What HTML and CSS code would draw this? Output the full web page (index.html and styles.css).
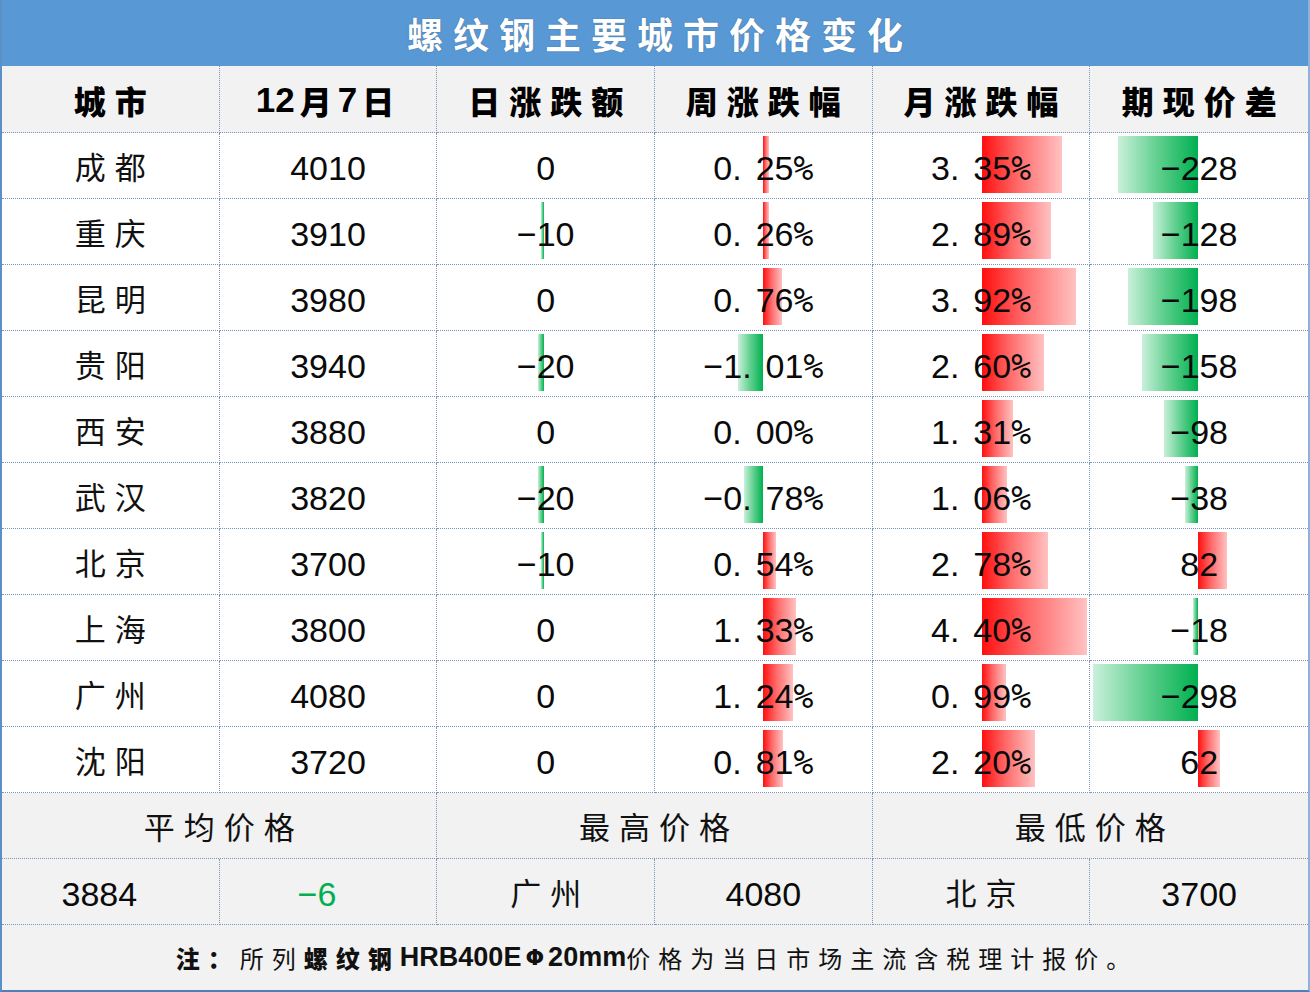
FILE: index.html
```html
<!DOCTYPE html>
<html lang="zh-CN">
<head>
<meta charset="utf-8">
<title>螺纹钢主要城市价格变化</title>
<link rel="stylesheet" href="styles.css">
</head>
<body>
<div class="sheet">
  <div class="title">螺纹钢主要城市价格变化</div>

  <div class="c hd"><span class="cjk">城市</span></div>
  <div class="c hd date"><span class="hnum">12</span><span class="hc">月</span><span class="hnum">7</span><span class="hc">日</span></div>
  <div class="c hd"><span class="cjk">日涨跌额</span></div>
  <div class="c hd"><span class="cjk">周涨跌幅</span></div>
  <div class="c hd"><span class="cjk">月涨跌幅</span></div>
  <div class="c hd last"><span class="cjk">期现价差</span></div>

  <!-- 成都 -->
  <div class="c city">成都</div>
  <div class="c num">4010</div>
  <div class="c num ax-d">0</div>
  <div class="c num ax-w"><span class="bar pos" style="width:6px"></span><span class="t">0<span class="dp">.</span>25<span class="pc">%</span></span></div>
  <div class="c num ax-m"><span class="bar pos" style="width:80px"></span><span class="t">3<span class="dp">.</span>35<span class="pc">%</span></span></div>
  <div class="c num ax-s last"><span class="bar neg" style="width:80px"></span><span class="t">−228</span></div>

  <!-- 重庆 -->
  <div class="c city">重庆</div>
  <div class="c num">3910</div>
  <div class="c num ax-d"><span class="bar neg" style="width:3px"></span><span class="t">−10</span></div>
  <div class="c num ax-w"><span class="bar pos" style="width:6px"></span><span class="t">0<span class="dp">.</span>26<span class="pc">%</span></span></div>
  <div class="c num ax-m"><span class="bar pos" style="width:69px"></span><span class="t">2<span class="dp">.</span>89<span class="pc">%</span></span></div>
  <div class="c num ax-s last"><span class="bar neg" style="width:45px"></span><span class="t">−128</span></div>

  <!-- 昆明 -->
  <div class="c city">昆明</div>
  <div class="c num">3980</div>
  <div class="c num ax-d">0</div>
  <div class="c num ax-w"><span class="bar pos" style="width:19px"></span><span class="t">0<span class="dp">.</span>76<span class="pc">%</span></span></div>
  <div class="c num ax-m"><span class="bar pos" style="width:94px"></span><span class="t">3<span class="dp">.</span>92<span class="pc">%</span></span></div>
  <div class="c num ax-s last"><span class="bar neg" style="width:70px"></span><span class="t">−198</span></div>

  <!-- 贵阳 -->
  <div class="c city">贵阳</div>
  <div class="c num">3940</div>
  <div class="c num ax-d"><span class="bar neg" style="width:6px"></span><span class="t">−20</span></div>
  <div class="c num ax-w"><span class="bar neg" style="width:25px"></span><span class="t">−1<span class="dp">.</span>01<span class="pc">%</span></span></div>
  <div class="c num ax-m"><span class="bar pos" style="width:62px"></span><span class="t">2<span class="dp">.</span>60<span class="pc">%</span></span></div>
  <div class="c num ax-s last"><span class="bar neg" style="width:56px"></span><span class="t">−158</span></div>

  <!-- 西安 -->
  <div class="c city">西安</div>
  <div class="c num">3880</div>
  <div class="c num ax-d">0</div>
  <div class="c num ax-w"><span class="t">0<span class="dp">.</span>00<span class="pc">%</span></span></div>
  <div class="c num ax-m"><span class="bar pos" style="width:31px"></span><span class="t">1<span class="dp">.</span>31<span class="pc">%</span></span></div>
  <div class="c num ax-s last"><span class="bar neg" style="width:34px"></span><span class="t">−98</span></div>

  <!-- 武汉 -->
  <div class="c city">武汉</div>
  <div class="c num">3820</div>
  <div class="c num ax-d"><span class="bar neg" style="width:6px"></span><span class="t">−20</span></div>
  <div class="c num ax-w"><span class="bar neg" style="width:19px"></span><span class="t">−0<span class="dp">.</span>78<span class="pc">%</span></span></div>
  <div class="c num ax-m"><span class="bar pos" style="width:25px"></span><span class="t">1<span class="dp">.</span>06<span class="pc">%</span></span></div>
  <div class="c num ax-s last"><span class="bar neg" style="width:13px"></span><span class="t">−38</span></div>

  <!-- 北京 -->
  <div class="c city">北京</div>
  <div class="c num">3700</div>
  <div class="c num ax-d"><span class="bar neg" style="width:3px"></span><span class="t">−10</span></div>
  <div class="c num ax-w"><span class="bar pos" style="width:13px"></span><span class="t">0<span class="dp">.</span>54<span class="pc">%</span></span></div>
  <div class="c num ax-m"><span class="bar pos" style="width:66px"></span><span class="t">2<span class="dp">.</span>78<span class="pc">%</span></span></div>
  <div class="c num ax-s last"><span class="bar pos" style="width:29px"></span><span class="t">82</span></div>

  <!-- 上海 -->
  <div class="c city">上海</div>
  <div class="c num">3800</div>
  <div class="c num ax-d">0</div>
  <div class="c num ax-w"><span class="bar pos" style="width:33px"></span><span class="t">1<span class="dp">.</span>33<span class="pc">%</span></span></div>
  <div class="c num ax-m"><span class="bar pos" style="width:105px"></span><span class="t">4<span class="dp">.</span>40<span class="pc">%</span></span></div>
  <div class="c num ax-s last"><span class="bar neg" style="width:5px"></span><span class="t">−18</span></div>

  <!-- 广州 -->
  <div class="c city">广州</div>
  <div class="c num">4080</div>
  <div class="c num ax-d">0</div>
  <div class="c num ax-w"><span class="bar pos" style="width:30px"></span><span class="t">1<span class="dp">.</span>24<span class="pc">%</span></span></div>
  <div class="c num ax-m"><span class="bar pos" style="width:24px"></span><span class="t">0<span class="dp">.</span>99<span class="pc">%</span></span></div>
  <div class="c num ax-s last"><span class="bar neg" style="width:105px"></span><span class="t">−298</span></div>

  <!-- 沈阳 -->
  <div class="c city">沈阳</div>
  <div class="c num">3720</div>
  <div class="c num ax-d">0</div>
  <div class="c num ax-w"><span class="bar pos" style="width:20px"></span><span class="t">0<span class="dp">.</span>81<span class="pc">%</span></span></div>
  <div class="c num ax-m"><span class="bar pos" style="width:53px"></span><span class="t">2<span class="dp">.</span>20<span class="pc">%</span></span></div>
  <div class="c num ax-s last"><span class="bar pos" style="width:22px"></span><span class="t">62</span></div>

  <!-- summary -->
  <div class="c sum span2">平均价格</div>
  <div class="c sum span2">最高价格</div>
  <div class="c sum span2 last">最低价格</div>

  <div class="c sv num shift">3884</div>
  <div class="c sv num green shift">−6</div>
  <div class="c sv city">广州</div>
  <div class="c sv num">4080</div>
  <div class="c sv city">北京</div>
  <div class="c sv num last">3700</div>

  <div class="note"><b class="nb">注：</b><span class="nc">所列</span><b class="nb">螺纹钢</b><b class="nl">HRB400E</b><b class="nphi">Φ</b><b class="nl">20mm</b><span class="nc">价格为当日市场主流含税理计报价。</span></div>
</div>
</body>
</html>
```

FILE: styles.css
```css
* { box-sizing: border-box; }

html, body {
  margin: 0;
  padding: 0;
  background: #ffffff;
}

body {
  font-family: "Noto Sans CJK SC", "Liberation Sans", sans-serif;
  color: #000;
}

.sheet {
  width: 1310px;
  height: 992px;
  display: grid;
  grid-template-columns: repeat(6, 1fr);
  grid-template-rows: 66px 67px repeat(10, 66px) 66px 66px 65px;
  border-left: 2px solid #5a8fc8;
  border-right: 2px solid #8fb2d8;
  border-bottom: 2px solid #4f7fb5;
  background: #ffffff;
}

.title {
  grid-column: 1 / -1;
  background: #5898d4;
  color: #ffffff;
  display: flex;
  align-items: center;
  justify-content: center;
  font-family: "Noto Sans CJK SC", sans-serif;
  font-weight: 700;
  font-size: 36px;
  letter-spacing: 10px;
  padding-left: 10px;
  text-shadow: 0 0 1px rgba(30, 50, 80, 0.7);
}

.c {
  position: relative;
  display: flex;
  align-items: center;
  justify-content: center;
  border-right: 1px dotted #7d95b8;
  border-bottom: 1px dotted #7d95b8;
  overflow: hidden;
}

.c.last { border-right: none; }

.hd {
  background: #f2f2f2;
  font-weight: 900;
  font-size: 32px;
  padding-top: 2px;
}

.hd .cjk {
  font-family: "Noto Sans CJK SC", sans-serif;
  letter-spacing: 9px;
  margin-right: -9px;
}

.hd .hc {
  font-family: "Noto Sans CJK SC", sans-serif;
  margin-right: 6px;
}

.hd .hc:last-child { margin-right: 0; }

.hd .hnum {
  font-family: "Liberation Sans", sans-serif;
  font-weight: 700;
  font-size: 35px;
  margin-right: 5px;
}

.date { padding-right: 6px; }

.city {
  font-family: "Noto Sans CJK SC", sans-serif;
  font-weight: 400;
  font-size: 31px;
  letter-spacing: 9px;
  padding-left: 9px;
  color: #111;
}

.num {
  font-family: "Liberation Sans", sans-serif;
  font-size: 34px;
  color: #0a0a0a;
  padding-top: 5px;
}

.num .t {
  position: relative;
  z-index: 1;
  white-space: nowrap;
}

.dp { margin-right: 14px; }

.pc {
  font-family: "DejaVu Sans Mono", monospace;
  font-size: 33px;
  font-weight: 400;
}

.ax-d { --ax: 107px; }
.ax-w { --ax: 108px; }
.ax-m { --ax: 109px; }
.ax-s { --ax: 108px; }

.bar {
  position: absolute;
  left: var(--ax);
  top: 3px;
  bottom: 5px;
  z-index: 0;
}

.bar.pos {
  background: linear-gradient(to right, #ff0f0f 0%, #ff6a6a 45%, #ffc2c2 100%);
}

.bar.neg {
  transform: translateX(-100%);
  background: linear-gradient(to left, #00b050 0%, #5fcf8e 50%, #c9f0da 100%);
}

.sum {
  background: #f2f2f2;
  font-family: "Noto Sans CJK SC", sans-serif;
  font-size: 31px;
  letter-spacing: 9px;
  padding-left: 9px;
  color: #111;
}

.span2 { grid-column: span 2; }

.sv { background: #f2f2f2; }

.shift { padding-right: 22px; }

.green { color: #00b050; }

.note {
  grid-column: 1 / -1;
  background: #f2f2f2;
  display: flex;
  align-items: center;
  justify-content: center;
  font-size: 24px;
  color: #111;
  padding-left: 4px;
}

.note .nb {
  font-family: "Noto Sans CJK SC", sans-serif;
  font-weight: 900;
  letter-spacing: 8px;
}

.note .nc {
  font-family: "Noto Sans CJK SC", sans-serif;
  font-weight: 400;
  letter-spacing: 8px;
}

.note .nl {
  font-family: "Liberation Sans", sans-serif;
  font-weight: 700;
  font-size: 27px;
}

.note .nphi {
  font-family: "DejaVu Sans", sans-serif;
  font-weight: 700;
  font-size: 22px;
  margin: 0 4px;
}
```
